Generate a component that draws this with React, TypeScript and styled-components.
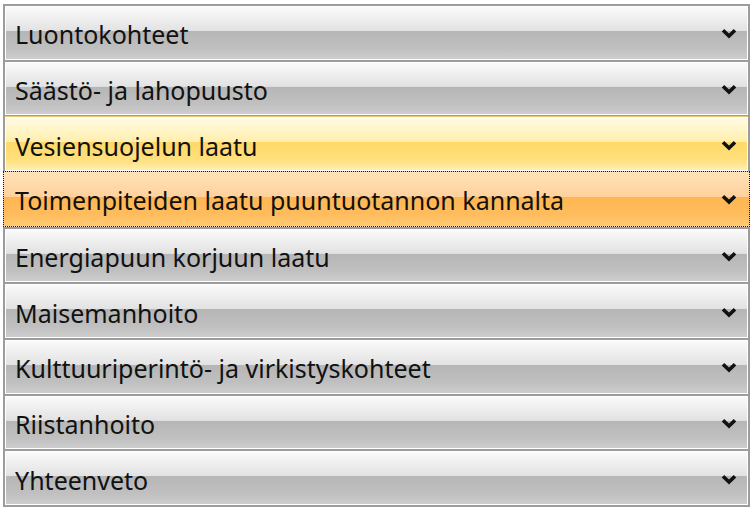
import styled, { createGlobalStyle, css } from "styled-components";

const GlobalStyle = createGlobalStyle`
  html, body {
    margin: 0;
    padding: 0;
    background: #ffffff;
  }
  body {
    font-family: "Noto Sans", "Open Sans", sans-serif;
  }
`;

type Variant = "normal" | "hover" | "selected";

const sections: { title: string; variant: Variant }[] = [
  { title: "Luontokohteet", variant: "normal" },
  { title: "Säästö- ja lahopuusto", variant: "normal" },
  { title: "Vesiensuojelun laatu", variant: "hover" },
  { title: "Toimenpiteiden laatu puuntuotannon kannalta", variant: "selected" },
  { title: "Energiapuun korjuun laatu", variant: "normal" },
  { title: "Maisemanhoito", variant: "normal" },
  { title: "Kulttuuriperintö- ja virkistyskohteet", variant: "normal" },
  { title: "Riistanhoito", variant: "normal" },
  { title: "Yhteenveto", variant: "normal" },
];

const Page = styled.div`
  padding: 4px 3px 0 3px;
  width: 747px;
`;

const Accordion = styled.div`
  box-sizing: border-box;
  height: 503px;
  border: 2px solid #9c9c9c;
  background: #9c9c9c;
  display: grid;
  grid-template-rows: repeat(9, 1fr);
  row-gap: 2px;
`;

const gradients: Record<Variant, string> = {
  normal:
    "linear-gradient(to bottom, #fafafa 0%, #e2e2e2 46%, #b6b6b6 47%, #c0c0c0 80%, #cdcdcd 100%)",
  hover:
    "linear-gradient(to bottom, #fffbe4 0%, #ffeeac 46%, #ffd968 47%, #ffe07e 80%, #ffeeb0 100%)",
  selected:
    "linear-gradient(to bottom, #ffe2b8 0%, #ffd19c 46%, #ffb652 47%, #ffbd5e 80%, #ffca74 100%)",
};

const Header = styled.div<{ $variant: Variant }>`
  box-sizing: border-box;
  display: flex;
  align-items: center;
  padding: 0 10px 0 9px;
  border: 1px solid #ffffff;
  background: ${(p) => gradients[p.$variant]};
  cursor: pointer;

  ${(p) =>
    p.$variant === "hover" &&
    css`
      box-shadow: 0 -1px 0 #e6c878;
    `}

  ${(p) =>
    p.$variant === "selected" &&
    css`
      border: 1px dotted #1a1a1a;
      margin: -2px -2px 0 -2px;
      padding-left: 11px;
      padding-right: 12px;
    `}
`;

const Title = styled.span`
  flex: 1;
  font-size: 25px;
  line-height: 30px;
  margin-top: 3px;
  color: #111111;
  white-space: nowrap;
`;

const Chevron = styled.svg`
  flex-shrink: 0;
  display: block;
  width: 16px;
  height: 11px;
  margin-top: 2px;
  overflow: visible;
`;

const ChevronDown = () => (
  <Chevron viewBox="0 0 16 11">
    <path
      d="M2 2.2 L8 8 L14 2.2"
      fill="none"
      stroke="#111111"
      strokeWidth="3.6"
      strokeLinecap="butt"
      strokeLinejoin="miter"
    />
  </Chevron>
);

export default function App() {
  return (
    <>
      <GlobalStyle />
      <Page>
        <Accordion>
          {sections.map((s) => (
            <Header key={s.title} $variant={s.variant}>
              <Title>{s.title}</Title>
              <ChevronDown />
            </Header>
          ))}
        </Accordion>
      </Page>
    </>
  );
}
